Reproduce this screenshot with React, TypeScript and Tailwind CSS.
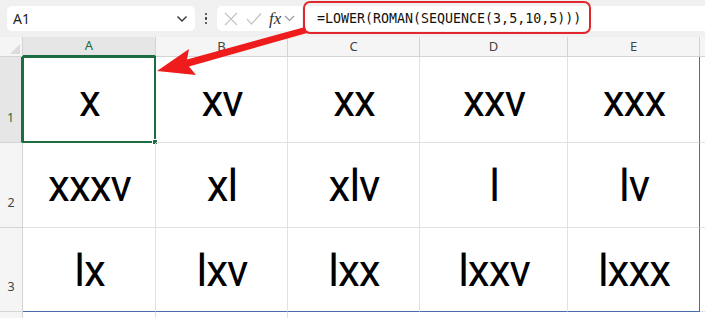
import React from "react";

const cols = ["A", "B", "C", "D", "E"];
const data = [
  ["x", "xv", "xx", "xxv", "xxx"],
  ["xxxv", "xl", "xlv", "l", "lv"],
  ["lx", "lxv", "lxx", "lxxv", "lxxx"],
];
const colW = ["w-[133px]", "w-[132px]", "w-[132px]", "w-[148px]", "w-[132px]"];
const rowH = ["h-[86px]", "h-[85px]", "h-[84px]"];

export default function App() {
  return (
    <div className="relative w-[705px] h-[318px] overflow-hidden bg-white" style={{ fontFamily: '"Noto Sans", "Open Sans", sans-serif' }}>
      {/* top bar */}
      <div className="h-[37px] bg-[#f0f0f0] flex items-center">
        <div className="ml-[7px] w-[188px] h-[25px] bg-white rounded-[5px] flex items-center justify-between px-[6px]">
          <span className="text-[14px] text-[#222]">A1</span>
          <svg width="12" height="8" viewBox="0 0 12 8" className="mr-[1px]"><path d="M1.5 1.5 L6 6 L10.5 1.5" stroke="#333" strokeWidth="1.4" fill="none" /></svg>
        </div>
        <div className="w-[22px] flex flex-col items-center gap-[2px]">
          <span className="w-[2.5px] h-[2.5px] bg-[#333] rounded-full" />
          <span className="w-[2.5px] h-[2.5px] bg-[#333] rounded-full" />
          <span className="w-[2.5px] h-[2.5px] bg-[#333] rounded-full" />
        </div>
        <div className="w-[85px] h-[25px] bg-white rounded-l-[5px] flex items-center pl-[7px]">
          <svg width="14" height="14" viewBox="0 0 14 14"><path d="M1 1 L13 13 M13 1 L1 13" stroke="#c4c4c4" strokeWidth="1.2" /></svg>
          <svg width="16" height="14" viewBox="0 0 16 14" className="ml-[8px]"><path d="M1 7 L5.5 12 L15 1.5" stroke="#c4c4c4" strokeWidth="1.2" fill="none" /></svg>
          <span className="ml-[7px] text-[17px] italic text-[#333] leading-none" style={{ fontFamily: '"Liberation Serif", serif' }}>fx</span>
          <svg width="11" height="7" viewBox="0 0 11 7" className="ml-[3px]"><path d="M1 1 L5.5 5.5 L10 1" stroke="#999" strokeWidth="1.2" fill="none" /></svg>
        </div>
        <div className="flex-1 h-[25px] bg-white ml-[3px] flex items-center pl-[12px]">
          <span className="text-[13.3px] text-[#111]" style={{ fontFamily: '"DejaVu Sans Mono", monospace' }}>=LOWER(ROMAN(SEQUENCE(3,5,10,5)))</span>
        </div>
      </div>

      {/* grid */}
      <div className="flex flex-col">
        <div className="flex h-[20px]">
          <div className="w-[23px] bg-[#f5f5f5] border-r border-b border-[#d4d4d4] relative">
            <svg width="10" height="10" viewBox="0 0 10 10" className="absolute right-[2px] bottom-[2px]"><path d="M10 0 L10 10 L0 10 Z" fill="#dcdcdc" /></svg>
          </div>
          {cols.map((c, i) => (
            <div key={c} className={`${colW[i]} flex items-center justify-center text-[13px] border-r border-b ${i === 0 ? "bg-[#e6e6e6] text-[#1d6b40] border-b-[#1e6c41] border-b-2 border-r-[#d4d4d4]" : "bg-[#f5f5f5] text-[#444] border-[#d4d4d4]"}`}>{c}</div>
          ))}
          <div className="flex-1 bg-[#f5f5f5] border-b border-[#d4d4d4]" />
        </div>
        {data.map((row, r) => (
          <div key={r} className={`flex ${rowH[r]}`}>
            <div className={`w-[23px] border-r border-b flex items-end justify-center pb-[14px] text-[12.5px] ${r === 0 ? "bg-[#e6e6e6] text-[#1d6b40] border-r-[#1e6c41] border-r-2 border-b-[#d4d4d4]" : "bg-[#f5f5f5] text-[#444] border-[#d4d4d4]"}`}>{r + 1}</div>
            {row.map((v, c) => (
              <div
                key={c}
                className={`${colW[c]} relative flex items-center justify-center text-[44px] tracking-[-1px] text-black ${c === 4 ? "border-r border-r-[#4a6cae]" : "border-r border-r-[#e1e1e1]"} ${r === 2 ? "border-b border-b-[#4a6cae]" : "border-b border-b-[#e1e1e1]"}`}
                style={{ fontFamily: 'Roboto, "Open Sans", sans-serif' }}
              >
                <span className="leading-none pt-[2px] pl-[1px]">{v}</span>
                {r === 0 && c === 0 && (
                  <div className="absolute left-[-1px] top-[-1px] right-[-1px] bottom-[-1px] border-2 border-[#1e6c41]">
                    <div className="absolute right-[-4px] bottom-[-4px] w-[6px] h-[6px] bg-[#1e6c41] border border-white" />
                  </div>
                )}
              </div>
            ))}
            <div className="flex-1 border-b border-[#e1e1e1]" />
          </div>
        ))}
        <div className="flex h-[10px]">
          <div className="w-[23px] bg-[#f5f5f5] border-r border-[#d4d4d4]" />
          <div className="w-[133px] border-r border-[#e1e1e1]" />
          <div className="w-[132px] border-r border-[#e1e1e1]" />
        </div>
      </div>

      {/* red highlight box */}
      <div className="absolute left-[303px] top-[1px] w-[288px] h-[33px] border-2 border-[#e3262c] rounded-[7px]" />

      {/* arrow */}
      <svg className="absolute left-0 top-0" width="705" height="318" viewBox="0 0 705 318">
        <polygon points="157,71 189,49 187,59.5 305,27 307,33 189,66.5 196,75" fill="#ee1c1c" />
      </svg>
    </div>
  );
}
